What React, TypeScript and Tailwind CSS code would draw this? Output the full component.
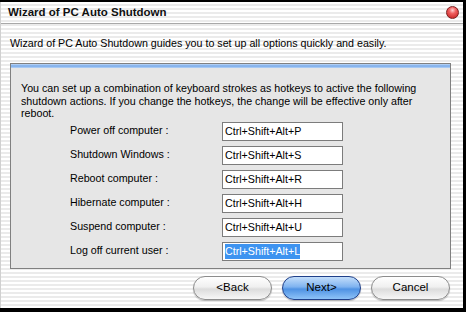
import React from "react";

const rows = [
  { label: "Power off computer :", keys: "Ctrl+Shift+Alt+P" },
  { label: "Shutdown Windows :", keys: "Ctrl+Shift+Alt+S" },
  { label: "Reboot computer :", keys: "Ctrl+Shift+Alt+R" },
  { label: "Hibernate computer :", keys: "Ctrl+Shift+Alt+H" },
  { label: "Suspend computer :", keys: "Ctrl+Shift+Alt+U" },
  { label: "Log off current user :", keys: "Ctrl+Shift+Alt+L", selected: true },
];

function AquaButton({ label, primary }: { label: string; primary?: boolean }) {
  return (
    <button
      className={`w-[79px] h-[24px] rounded-full border text-[11.5px] leading-none text-black ${
        primary
          ? "border-[#20408a] bg-[linear-gradient(180deg,#c4defa_0%,#7fb3f0_45%,#4f92e3_55%,#8ec3f8_100%)]"
          : "border-[#8c8c8c] bg-[linear-gradient(180deg,#ffffff_0%,#f0f0f0_45%,#dcdcdc_55%,#f7f7f7_100%)]"
      } shadow-[0_1px_1px_rgba(0,0,0,0.25)]`}
    >
      {label}
    </button>
  );
}

export default function App() {
  return (
    <div
      className="w-[466px] h-[312px] bg-black pt-[2px] pr-[3px] pb-[4px] overflow-hidden"
      style={{ fontFamily: '"Liberation Sans", Arial, sans-serif' }}
    >
      <div className="h-full flex flex-col bg-[repeating-linear-gradient(180deg,#ffffff_0px,#ffffff_2px,#ebebeb_2px,#ebebeb_4px)] border-l border-[#d0d0d0]">
        {/* Title bar */}
        <div className="h-[22px] flex items-center justify-between pl-[7px] pr-[4px] border-b border-[#a8a8a8]">
          <span className="text-[11.5px] font-bold text-[#111]">Wizard of PC Auto Shutdown</span>
          <span className="w-[13px] h-[13px] rounded-full border border-[#7a2020] bg-[radial-gradient(circle_at_50%_30%,#ffd0d0_0%,#f06060_35%,#c01818_100%)]" />
        </div>

        {/* Description */}
        <div className="h-[39px] flex items-center pl-[9px] pb-[1px] text-[10.7px] text-black">
          Wizard of PC Auto Shutdown guides you to set up all options quickly and easily.
        </div>

        {/* Panel */}
        <div className="ml-[9px] mr-[12px] h-[206px] border border-[#808080] bg-[#e6e6e6] flex flex-col">
          <div className="h-[4px] bg-[linear-gradient(180deg,#c2daf7_0%,#78aaea_50%,#b8d4f6_100%)]" />
          <p className="pt-[14px] pl-[10px] text-[10.7px] leading-[12.5px] text-black whitespace-nowrap">
            You can set up a combination of keyboard strokes as hotkeys to active the following
            <br />
            shutdown actions. If you change the hotkeys, the change will be effective only after
            <br />
            reboot.
          </p>
          <div className="mt-[2px] flex flex-col gap-[5px]">
            {rows.map((r) => (
              <div key={r.label} className="flex items-center">
                <span className="w-[211px] shrink-0 pl-[59px] pb-[2px] text-[10.7px] text-black whitespace-nowrap">{r.label}</span>
                <div className="w-[121px] h-[19px] shrink-0 border border-[#7c7c7c] bg-white flex items-center pl-[2px] text-[10.7px] whitespace-nowrap">
                  <span className={r.selected ? "bg-[#3d93f0] text-white leading-[15px]" : "text-black"}>{r.keys}</span>
                </div>
              </div>
            ))}
          </div>
        </div>

        {/* Buttons */}
        <div className="flex justify-end gap-[10px] pr-[13px] pt-[7px]">
          <AquaButton label="<Back" />
          <AquaButton label="Next>" primary />
          <AquaButton label="Cancel" />
        </div>
      </div>
    </div>
  );
}
